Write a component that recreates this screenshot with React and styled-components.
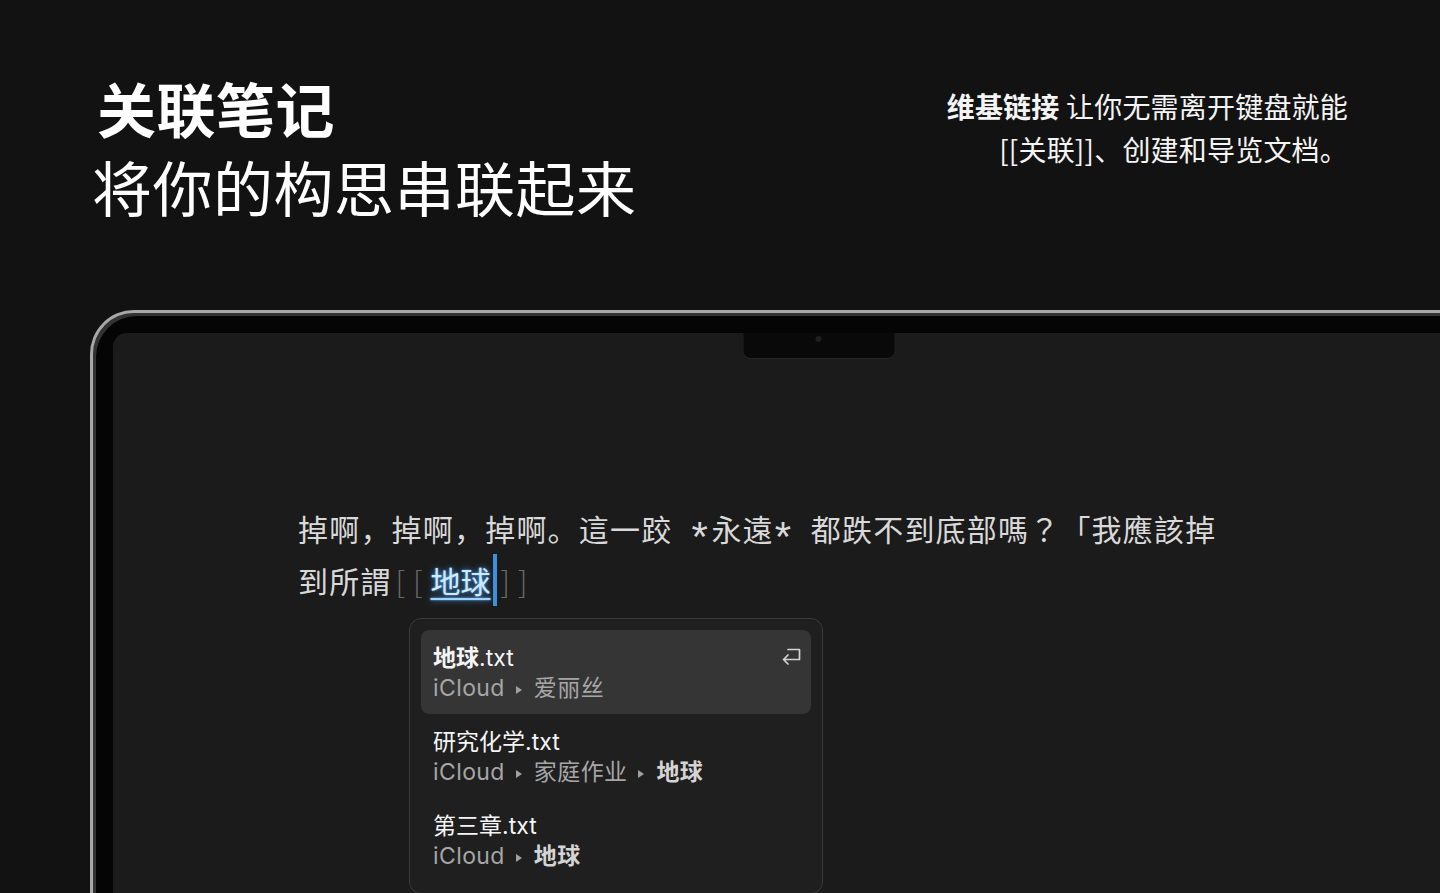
import React from "react";
import styled, { createGlobalStyle } from "styled-components";

const GlobalStyle = createGlobalStyle`
  html, body {
    margin: 0;
    padding: 0;
    background: #121212;
    height: 893px;
    overflow: hidden;
  }
  body {
    font-family: Inter, "Noto Sans CJK SC", sans-serif;
    color: #f2f2f2;
  }
`;

const Page = styled.div`
  width: 1440px;
  height: 893px;
  overflow: hidden;
  background: #121212;
`;

const Header = styled.header`
  display: flex;
  justify-content: space-between;
  align-items: flex-start;
  padding: 72px 92px 0 92px;
  height: 238px;
  box-sizing: border-box;
`;

const TitleBlock = styled.div`
  display: flex;
  flex-direction: column;
  font-family: "Noto Sans CJK SC", sans-serif;
  color: #ffffff;
`;

const TitleLine = styled.div`
  font-size: ${(p) => p.$size}px;
  font-weight: ${(p) => (p.$bold ? 700 : 400)};
  line-height: ${(p) => p.$lh}px;
  margin-left: ${(p) => p.$indent || 0}px;
  letter-spacing: 0.5px;
`;

const Blurb = styled.p`
  margin: 13px 0 0 0;
  text-align: right;
  font-family: "Noto Sans CJK SC", sans-serif;
  font-size: 28px;
  line-height: 43px;
  color: #f4f4f4;
  letter-spacing: 0.2px;

  strong {
    font-weight: 700;
  }
`;

const LaptopRow = styled.div`
  padding: 72px 0 0 90px;
`;

const Laptop = styled.div`
  position: relative;
  width: 1454px;
  height: 640px;
  box-sizing: border-box;
  background: #050505;
  border-top: 3px solid #a8a8a8;
  border-left: 3px solid #a8a8a8;
  border-radius: 44px 0 0 0;
  box-shadow: inset 3px 3px 0 #333333;
  padding: 20px 0 0 20px;
`;

const Notch = styled.div`
  position: absolute;
  top: 20px;
  left: 50%;
  transform: translateX(-50%);
  width: 151px;
  height: 25px;
  background: #090909;
  border-radius: 0 0 7px 7px;
  box-shadow: 0 1px 0 #262626;

  &::after {
    content: "";
    position: absolute;
    left: 50%;
    top: 3px;
    width: 6px;
    height: 6px;
    margin-left: -3px;
    border-radius: 50%;
    background: #1f1f1f;
  }
`;

const Screen = styled.div`
  height: 100%;
  background: #1b1b1b;
  border-radius: 14px 0 0 0;
  padding: 169px 0 0 185px;
  box-sizing: border-box;
`;

const Editor = styled.div`
  font-family: "Noto Sans CJK SC", sans-serif;
  font-size: 30px;
  letter-spacing: 1.2px;
  color: #d9d9d9;
`;

const Line = styled.div`
  display: flex;
  align-items: center;
  height: 52px;
  white-space: pre;
`;

const Star = styled.span`
  display: inline-block;
  width: 16px;
  text-align: center;
  font-family: "Liberation Sans", sans-serif;
  font-size: 42px;
  line-height: 30px;
  letter-spacing: 0;
  transform: translateY(9px);
  margin-left: ${(p) => p.$l}px;
  margin-right: ${(p) => p.$r}px;
`;

const Punct = styled.span`
  font-family: "Noto Sans CJK TC", sans-serif;
`;

const Bracket = styled.span`
  color: #6b6b6b;
  font-weight: 300;
  letter-spacing: 8px;
  margin-left: ${(p) => p.$l || 0}px;
`;

const LinkText = styled.span`
  color: #cdeaff;
  text-shadow: 0 0 6px rgba(70, 160, 255, 0.9), 0 0 2px rgba(120, 190, 255, 0.8);
  text-decoration: underline;
  text-decoration-color: #9fd2ff;
  text-underline-offset: 5px;
  text-decoration-thickness: 2px;
  letter-spacing: 0;
`;

const Caret = styled.span`
  display: inline-block;
  width: 4px;
  height: 52px;
  background: #3d8fe0;
  margin: 0 4px 0 2px;
`;

const Popup = styled.div`
  margin: 12px 0 0 111px;
  width: 414px;
  box-sizing: border-box;
  background: #1f1f1f;
  border: 1px solid #3a3a3a;
  border-radius: 12px;
  padding: 11px;
  display: flex;
  flex-direction: column;
`;

const Item = styled.div`
  position: relative;
  display: flex;
  flex-direction: column;
  padding: 13px 12px 10px 12px;
  border-radius: 8px;
  background: ${(p) => (p.$active ? "#353535" : "transparent")};
`;

const ItemTitle = styled.div`
  font-family: Inter, "Noto Sans CJK SC", sans-serif;
  font-size: 23px;
  line-height: 30px;
  color: #f5f5f5;

  b {
    font-weight: 700;
  }
`;

const ItemPath = styled.div`
  display: flex;
  align-items: center;
  font-family: Inter, "Noto Sans CJK SC", sans-serif;
  font-size: 23px;
  line-height: 31px;
  color: #a6a6a6;
  letter-spacing: 0.4px;

  b {
    font-weight: 700;
    color: #d4d4d4;
  }
`;

const Sep = styled.span`
  display: inline-block;
  width: 0;
  height: 0;
  border-top: 4px solid transparent;
  border-bottom: 4px solid transparent;
  border-left: 6px solid #a0a0a0;
  margin: 2px 12px 0 11px;
`;

const EnterIcon = styled.svg`
  position: absolute;
  right: 9px;
  top: 16px;
`;

const results = [
  { name: "地球", bold: true, path: [{ t: "爱丽丝" }], active: true },
  { name: "研究化学", path: [{ t: "家庭作业" }, { t: "地球", b: true }] },
  { name: "第三章", path: [{ t: "地球", b: true }] },
];

function ReturnGlyph() {
  return (
    <EnterIcon width="22" height="22" viewBox="0 0 22 22" fill="none">
      <path
        d="M8 3.5h11.5v10H3.5M8 9l-4.5 4.5L8 18"
        stroke="#d4d4d4"
        strokeWidth="1.7"
        strokeLinecap="round"
        strokeLinejoin="round"
      />
    </EnterIcon>
  );
}

export default function App() {
  return (
    <Page>
      <GlobalStyle />
      <Header>
        <TitleBlock>
          <TitleLine $size={59} $bold $lh={72} $indent={5}>
            关联笔记
          </TitleLine>
          <TitleLine $size={60} $lh={84}>
            将你的构思串联起来
          </TitleLine>
        </TitleBlock>
        <Blurb>
          <strong>维基链接</strong> 让你无需离开键盘就能
          <br />
          [[关联]]、创建和导览文档。
        </Blurb>
      </Header>

      <LaptopRow>
        <Laptop>
          <Notch />
          <Screen>
            <Editor>
              <Line>
                掉啊，掉啊，掉啊。這一跤
                <Star $l={19} $r={4}>*</Star>
                永遠
                <Star $l={1} $r={20}>*</Star>
                都跌不到底部嗎<Punct>？</Punct>「我應該掉
              </Line>
              <Line>
                到所謂
                <Bracket $l={4}>[[</Bracket>
                <LinkText>地球</LinkText>
                <Caret />
                <Bracket>]]</Bracket>
              </Line>
            </Editor>
            <Popup>
              {results.map((r) => (
                <Item key={r.name} $active={r.active}>
                  <ItemTitle>
                    {r.bold ? <b>{r.name}</b> : r.name}.txt
                  </ItemTitle>
                  <ItemPath>
                    iCloud
                    {r.path.map((p, i) => (
                      <React.Fragment key={i}>
                        <Sep />
                        {p.b ? <b>{p.t}</b> : p.t}
                      </React.Fragment>
                    ))}
                  </ItemPath>
                  {r.active && <ReturnGlyph />}
                </Item>
              ))}
            </Popup>
          </Screen>
        </Laptop>
      </LaptopRow>
    </Page>
  );
}
